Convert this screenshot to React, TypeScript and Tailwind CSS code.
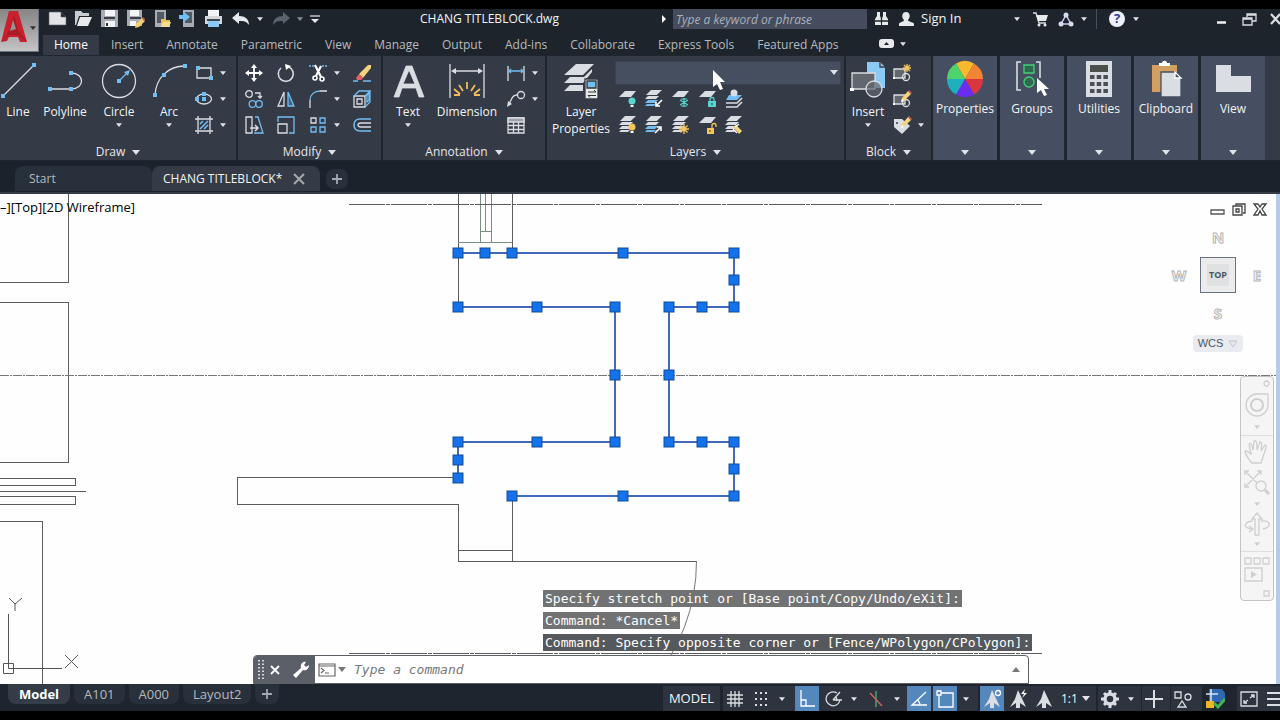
import type { ReactNode } from "react";

type IconProps = { w?: number; h?: number; children: ReactNode };

const Icon = ({ w = 20, h = 20, children }: IconProps) => (
  <svg
    width={w}
    height={h}
    viewBox={`0 0 ${w} ${h}`}
    fill="none"
    stroke="#dadde1"
    strokeWidth="1.3"
    className="shrink-0"
    aria-hidden="true"
  >
    {children}
  </svg>
);

const Caret = ({ big = false, color = "#dfe2e6" }: { big?: boolean; color?: string }) => (
  <svg width={big ? 8 : 6} height={big ? 5 : 4} viewBox="0 0 8 5" className="shrink-0" aria-hidden="true">
    <path d="M0 0H8L4 5Z" fill={color} />
  </svg>
);

const Dot = ({ x, y }: { x: number; y: number }) => (
  <rect x={x - 2} y={y - 2} width="4" height="4" fill="#72bdf2" stroke="none" />
);

const Pencil = () => (
  <g stroke="none">
    <path d="M9 13L10 9L16 2L19 5L13 11Z" fill="#f3d37c" />
    <path d="M16 2L17 1L20 4L19 5Z" fill="#d9534a" />
    <path d="M9 13L10 10L12 12Z" fill="#fff" />
  </g>
);

const Stack = ({ blue = false }: { blue?: boolean }) => (
  <g stroke="none">
    <path d="M7 1H18L13 6H2Z" fill="#dadde1" />
    <path d="M4 7H15L12 10H1Z" fill="#dadde1" />
    <path d="M4 11H14L11 14H1Z" fill={blue ? "#72bdf2" : "#dadde1"} />
    <path d="M3 15H12L10 17H1Z" fill={blue ? "#72bdf2" : "#dadde1"} />
    <path d="M1 6.500H13L18 2M1 10.500H12M1 14.500H12" stroke="#343a46" strokeWidth="1" />
  </g>
);

const Sheet = () => <path d="M7 2H18L13 8H1Z" fill="#dadde1" stroke="none" />;

/* ---------- title bar ---------- */

const quickAccess = [
  {
    label: "New",
    icon: <path d="M1 2H13L18 7V15H1Z M13 2V7H18" fill="#e1e3e6" stroke="#5b616b" strokeWidth="0.6" />,
  },
  {
    label: "Open",
    icon: (
      <g stroke="none">
        <path d="M1 1H7L9 3H15V6H5L2 15H1Z" fill="#c9ccd1" />
        <path d="M6 7H18L14 16H3Z" fill="#e7e9eb" />
      </g>
    ),
  },
  {
    label: "Save",
    icon: (
      <g stroke="none">
        <path d="M1 0H18V17H1Z" fill="#a9adb3" />
        <path d="M5 0H15V6H5ZM5 11H15V17H5Z" fill="#f3f4f5" />
        <path d="M4 7H15V9H4Z" fill="#3a3f48" />
        <path d="M6 13H8V16H6Z" fill="#333" />
      </g>
    ),
  },
  {
    label: "Save As",
    icon: (
      <g stroke="none">
        <path d="M1 0H16V16H1Z" fill="#a9adb3" />
        <path d="M4 0H13V6H4ZM4 11H10V16H4Z" fill="#f3f4f5" />
        <path d="M4 7H15V9H4Z" fill="#3a3f48" />
        <path d="M9 18L10 14L16 8L19 11L13 17Z" fill="#efcf6e" />
        <path d="M16 8L17 7L19 9L18 11Z" fill="#d9534a" />
      </g>
    ),
  },
  {
    label: "Open from Web and Mobile",
    icon: (
      <g stroke="none">
        <path d="M3 0H14V17H3Z" fill="#a9adb3" />
        <path d="M5 2H12V13H5Z" fill="#535963" />
        <path d="M9 9H13L14 10H18V17H9Z" fill="#edbf57" />
        <path d="M11 12H19L17 17H9Z" fill="#f7dc93" />
      </g>
    ),
  },
  {
    label: "Save to Web and Mobile",
    icon: (
      <g stroke="none">
        <path d="M5 0H16V17H5Z" fill="#a9adb3" />
        <path d="M7 2H14V13H7Z" fill="#535963" />
        <path d="M1 5H6V2L12 7L6 12V9H1Z" fill="#72bdf2" />
      </g>
    ),
  },
  {
    label: "Plot",
    icon: (
      <g stroke="none">
        <path d="M4 0H15V6H4Z" fill="#f3f4f5" />
        <path d="M1 6H18V14H1Z" fill="#d3d6da" />
        <path d="M3 9H16V11H3Z" fill="#41464f" />
        <path d="M4 11H15V17H4Z" fill="#8ccaf5" />
      </g>
    ),
  },
];

const menuTabs = [
  "Home",
  "Insert",
  "Annotate",
  "Parametric",
  "View",
  "Manage",
  "Output",
  "Add-ins",
  "Collaborate",
  "Express Tools",
  "Featured Apps",
];

function TitleBar() {
  return (
    <div className="mb-[6px] flex h-5 items-center">
      <div className="flex items-center gap-[6px] pl-[5px]">
        {quickAccess.map((q) => (
          <button key={q.label} aria-label={q.label}>
            <Icon w={20} h={18}>{q.icon}</Icon>
          </button>
        ))}
      </div>
      <button aria-label="Undo" className="ml-2">
        <Icon w={18} h={14}>
          <path d="M0 6L7 0V4C13 4 17 7 17 13C14 9 12 9 7 9V12Z" fill="#e7e9eb" stroke="none" />
        </Icon>
      </button>
      <button aria-label="Undo history" className="ml-[7px]">
        <Caret />
      </button>
      <button aria-label="Redo" className="ml-[9px]">
        <Icon w={18} h={14}>
          <path d="M18 6L11 0V4C5 4 1 7 1 13C4 9 6 9 11 9V12Z" fill="#5c626b" stroke="none" />
        </Icon>
      </button>
      <button aria-label="Redo history" className="ml-[7px]">
        <Caret color="#8b9098" />
      </button>
      <button aria-label="Customize toolbar" className="ml-[7px]">
        <Icon w={10} h={9}>
          <path d="M0 1H10" />
          <path d="M1 4H9L5 8Z" fill="#e7e9eb" stroke="none" />
        </Icon>
      </button>
      <h1 className="ml-[100px] whitespace-nowrap text-xs text-gray-100">CHANG TITLEBLOCK.dwg</h1>

      <div className="ml-auto flex w-[620px] shrink-0 items-center">
        <button aria-label="Collapse search" className="w-[13px]">
          <Icon w={8} h={8}>
            <path d="M2 0L6 4L2 8Z" fill="#fff" stroke="none" />
          </Icon>
        </button>
        <input
          aria-label="Search help"
          placeholder="Type a keyword or phrase"
          className="h-5 w-[194px] bg-[#444c5d] px-[3px] text-xs text-white outline-none placeholder:italic placeholder:text-[#abb1bc]"
        />
        <button aria-label="Find" className="ml-[6px]">
          <Icon w={17} h={16}>
            <path d="M4 1H7V5L8 7V14H2V8L4 5ZM10 1H13V5L15 8V14H9V7L10 5Z" fill="#e7e9eb" stroke="none" />
            <path d="M2 10H15M8.500 2V12" stroke="#1e242c" />
          </Icon>
        </button>
        <button className="ml-2 flex items-center gap-[6px] whitespace-nowrap text-gray-100">
          <Icon w={17} h={16}>
            <path d="M1 15V13C1 11 6 11 6 9C3 6 4 1 8 1C12 1 13 6 10 9C10 11 16 11 16 13V15Z" fill="#e7e9eb" stroke="none" />
          </Icon>
          <span className="w-[87px] text-left text-[13px]">Sign In</span>
          <Caret />
        </button>
        <button aria-label="Autodesk App Store" className="ml-3">
          <Icon w={17} h={15}>
            <path d="M1 1H4L7 11H14" />
            <path d="M4 3H16L14 9H6Z" fill="#e7e9eb" stroke="none" />
            <circle cx="7" cy="13" r="1.500" fill="#e7e9eb" stroke="none" />
            <circle cx="13" cy="13" r="1.500" fill="#e7e9eb" stroke="none" />
          </Icon>
        </button>
        <button aria-label="Stay connected" className="ml-[9px] flex items-center gap-[7px]">
          <Icon w={16} h={15}>
            <path d="M8 3L3 12H13Z" stroke="#c9cbe6" strokeWidth="1.500" />
            <g fill="#d9dbf2" stroke="none">
              <circle cx="8" cy="3" r="2.500" />
              <circle cx="3" cy="12" r="2.500" />
              <circle cx="13" cy="12" r="2.500" />
            </g>
          </Icon>
          <Caret />
        </button>
        <span className="ml-[9px] h-5 w-px bg-[#4a505a]" />
        <button aria-label="Help" className="ml-3 flex items-center gap-2">
          <span className="flex size-4 items-center justify-center rounded-full bg-[#eef0fa] text-[13px] font-bold text-[#2c3a94]">?</span>
          <Caret />
        </button>
        <div className="ml-auto flex items-center">
          <button aria-label="Minimize" className="mr-4">
            <Icon w={10} h={12}>
              <path d="M1 9.500H10" strokeWidth="2.500" stroke="#f0f1f2" />
            </Icon>
          </button>
          <button aria-label="Restore" className="mr-[13px]">
            <Icon w={15} h={13}>
              <path d="M5 4V1H14V8H10M1 5H10V12H1ZM1 6H10M5 2H14" />
            </Icon>
          </button>
          <button aria-label="Close" className="w-[10px] overflow-hidden">
            <Icon w={12} h={12}>
              <path d="M1 1L10 11M10 1L1 11" strokeWidth="2.200" />
            </Icon>
          </button>
        </div>
      </div>
    </div>
  );
}

function Header() {
  return (
    <header className="flex bg-[#1e242c]">
      <button
        aria-label="Application menu"
        className="flex h-[43px] w-[39px] shrink-0 items-center gap-[2px] border-r border-b border-gray-500 bg-linear-to-b from-[#858585] to-[#c4c4c4] pb-1"
      >
        <Icon w={28} h={36}>
          <path d="M1 32L9 1H18L27 32H20L18 27H9L7 31Z" fill="#c8202d" stroke="none" />
          <path d="M1 32C7 27 11 18 14 5L18 20L27 32L18 25L9 25Z" fill="#8f1420" stroke="none" opacity="0.5" />
          <path d="M13 10L16 19L10 21Z" fill="#949494" stroke="none" />
        </Icon>
        <Caret color="#333" />
      </button>
      <div className="min-w-0 flex-1 pl-[4px]">
        <TitleBar />
        <nav className="flex items-end gap-px">
          {menuTabs.map((t) => (
            <button
              key={t}
              className={
                t === "Home"
                  ? "h-5 whitespace-nowrap bg-[#343a46] px-[11px] text-xs leading-5 text-white"
                  : "h-5 whitespace-nowrap px-[11px] text-xs leading-5 text-[#b6babf]"
              }
            >
              {t}
            </button>
          ))}
          <button aria-label="Ribbon display" className="mb-[7px] ml-7 flex items-center gap-[6px]">
            <Icon w={15} h={9}>
              <rect width="15" height="9" rx="3" fill="#e7e9eb" stroke="none" />
              <path d="M5 6L7.500 3L10 6Z" fill="#1e242c" stroke="none" />
            </Icon>
            <Caret />
          </button>
        </nav>
      </div>
    </header>
  );
}

/* ---------- ribbon ---------- */

type PanelProps = { title: string; width: string; children: ReactNode };

const Panel = ({ title, width, children }: PanelProps) => (
  <section className={`flex shrink-0 flex-col border-r-2 border-[#20262f] bg-[#343a46] ${width}`}>
    <div className="flex flex-1">{children}</div>
    <button className="flex h-4 items-center justify-center gap-[7px] text-xs text-gray-200">
      {title}
      <Caret big />
    </button>
  </section>
);

type BigToolProps = { label: string; width: string; caret?: boolean; children: ReactNode };

const BigTool = ({ label, width, caret, children }: BigToolProps) => (
  <button className={`flex shrink-0 flex-col items-center pt-[5px] text-xs leading-[17px] text-gray-100 ${width}`}>
    <Icon w={38} h={38}>{children}</Icon>
    <span className="mt-1 mb-[3px]">{label}</span>
    {caret && <Caret />}
  </button>
);

type ToolProps = { label: string; caret?: boolean; children: ReactNode };

const Tool = ({ label, caret, children }: ToolProps) => (
  <button aria-label={label} className="flex h-[26px] items-center gap-[6px]">
    <Icon>{children}</Icon>
    {caret && <Caret />}
  </button>
);

function DrawPanel() {
  return (
    <Panel title="Draw" width="w-[238px]">
      <BigTool label="Line" width="w-9">
        <path d="M4 35L35 4" />
        <Dot x={4} y={35} />
        <Dot x={35} y={4} />
      </BigTool>
      <BigTool label="Polyline" width="w-[58px]">
        <path d="M4 28H25C39 28 39 12 25 12" />
        <Dot x={4} y={28} />
        <Dot x={25} y={28} />
        <Dot x={25} y={12} />
      </BigTool>
      <BigTool label="Circle" width="w-[50px]" caret>
        <circle cx="19" cy="20" r="16.500" />
        <path d="M19 20L28 11" stroke="#72bdf2" />
        <path d="M30 9L28 15L24 11Z" fill="#72bdf2" stroke="none" />
        <Dot x={19} y={20} />
      </BigTool>
      <BigTool label="Arc" width="w-[50px]" caret>
        <path d="M5 34C6 17 18 5 35 5" />
        <Dot x={5} y={34} />
        <Dot x={14} y={14} />
        <Dot x={35} y={5} />
      </BigTool>
      <div className="pt-1">
        <Tool label="Rectangle" caret>
          <path d="M3 5H17V15H3Z" />
          <Dot x={4} y={5} />
          <Dot x={17} y={15} />
        </Tool>
        <Tool label="Ellipse" caret>
          <ellipse cx="10" cy="10" rx="7.500" ry="5" />
          <Dot x={10} y={10} />
          <Dot x={3} y={10} />
          <Dot x={10} y={5} />
        </Tool>
        <Tool label="Hatch" caret>
          <path d="M4 1V19M16 1V19M1 4H19M1 16H19" />
          <path d="M6 9L9 6M6 14L14 6M10 14L14 10" stroke="#72bdf2" strokeWidth="1.600" />
        </Tool>
      </div>
    </Panel>
  );
}

function ModifyPanel() {
  return (
    <Panel title="Modify" width="w-[145px]">
      <div className="grid grid-cols-[32px_32px_44px_20px] content-start pt-1 pl-[6px]">
        <Tool label="Move">
          <path d="M10 3V17M3 10H17" stroke="#fff" strokeWidth="1.800" />
          <path d="M10 1L13 5H7ZM10 19L13 15H7ZM1 10L5 7V13ZM19 10L15 7V13Z" fill="#fff" stroke="none" />
        </Tool>
        <Tool label="Rotate">
          <path d="M13 4A7.500 7.500 0 1 1 5 5" strokeWidth="1.600" />
          <path d="M9 1L15 3L10 7Z" fill="#fff" stroke="none" />
        </Tool>
        <Tool label="Trim" caret>
          <path d="M1 3H7M14 3H19" stroke="#72bdf2" strokeDasharray="2 1" />
          <path d="M7 2L13 14M13 3L8 13" stroke="#fff" strokeWidth="2.200" />
          <circle cx="7" cy="15" r="2" stroke="#fff" strokeWidth="1.600" />
          <circle cx="14" cy="16" r="2" stroke="#fff" strokeWidth="1.600" />
        </Tool>
        <Tool label="Erase">
          <path d="M1 18H6M11 18H19" stroke="#72bdf2" />
          <path d="M7 11L16 2H19V5L11 15Z" fill="#f3d37c" stroke="none" />
          <path d="M7 11L11 15L9 17H5L4 15Z" fill="#e4606b" stroke="none" />
        </Tool>
        <Tool label="Copy">
          <circle cx="5" cy="5" r="3.300" />
          <path d="M11 4H16V8M14 7L16 9L18 7" />
          <circle cx="8.500" cy="15" r="3.300" stroke="#72bdf2" />
          <circle cx="15" cy="15" r="3.300" stroke="#72bdf2" />
        </Tool>
        <Tool label="Mirror">
          <path d="M8 3V17H2Z" />
          <path d="M12 3V17H18Z" stroke="#72bdf2" fill="#426581" />
        </Tool>
        <Tool label="Fillet" caret>
          <path d="M2 19V11M12 2H19" />
          <path d="M2 11C2 6 6 2 12 2" stroke="#72bdf2" />
        </Tool>
        <Tool label="Explode">
          <path d="M2 7H13V18H2ZM5 10H10V15H5Z" />
          <path d="M2 7L7 2H18L13 7M18 2V13L13 18M15 6L17 4V11L15 13Z" stroke="#72bdf2" />
        </Tool>
        <Tool label="Stretch">
          <path d="M2 2H8V18H2Z" />
          <path d="M11 2H14L19 18H10" stroke="#72bdf2" />
          <path d="M6 13H14M11 10L14 13L11 16" strokeWidth="1.500" />
        </Tool>
        <Tool label="Scale">
          <path d="M2 7V2H18V18H13" stroke="#72bdf2" />
          <path d="M2 9H11V18H2Z" />
        </Tool>
        <Tool label="Array" caret>
          <path d="M3 3H8V8H3Z" />
          <path d="M12 3H17V8H12ZM3 12H8V17H3ZM12 12H17V17H12Z" stroke="#72bdf2" />
        </Tool>
        <Tool label="Offset">
          <path d="M19 4H8C0 4 0 16 8 16H19" stroke="#72bdf2" strokeWidth="1.600" />
          <path d="M19 8H9C5 8 5 12 9 12H19" />
        </Tool>
      </div>
    </Panel>
  );
}

function AnnotationPanel() {
  return (
    <Panel title="Annotation" width="w-[164px]">
      <BigTool label="Text" width="w-[50px]" caret>
        <path d="M5 36L17 5H23L35 36H30L27 27H13L10 36ZM14 23H26L20 9Z" fill="#dadde1" stroke="#dadde1" strokeWidth="0.800" />
      </BigTool>
      <BigTool label="Dimension" width="w-[68px]">
        <path d="M2 3V37M36 3V37M5 10H33" />
        <path d="M3 10L8 7V13ZM35 10L30 7V13Z" fill="#dadde1" stroke="none" />
        <path d="M19 21V28M11 24L15 30M27 24L23 30M6 28L12 33M32 28L26 33M6 34H12M26 34H32" stroke="#f0bd5a" strokeWidth="1.800" />
      </BigTool>
      <div className="pt-1 pl-[5px]">
        <Tool label="Linear" caret>
          <path d="M2 3V18M18 3V18" />
          <path d="M3 8H17M5 6L3 8L5 10M15 6L17 8L15 10" stroke="#72bdf2" />
        </Tool>
        <Tool label="Leader" caret>
          <circle cx="15" cy="6" r="3.500" />
          <path d="M11 6C6 6 6 10 3 15" />
          <path d="M1 18L2 12L6 15Z" fill="#dadde1" stroke="none" />
        </Tool>
        <Tool label="Table">
          <path d="M2 3H18V18H2ZM2 10.500H18M2 14.500H18M7.500 7V18M12.500 7V18" />
          <path d="M2 3H18V7H2Z" fill="#9ba0a8" />
        </Tool>
      </div>
    </Panel>
  );
}

const layerTools = [
  { label: "Off", icon: <><Sheet /><circle cx="14" cy="12" r="3.500" fill="#58d5cf" stroke="none" /><path d="M12.500 17H15.500" stroke="#fff" strokeWidth="2" /></> },
  { label: "Isolate", icon: <><Stack blue /><path d="M18 11L12 17M12 13V17H16" stroke="#fff" strokeWidth="1.600" /></> },
  { label: "Freeze", icon: <><Sheet /><path d="M13 9V18M9 11L17 16M17 11L9 16M10 10H16M10 17H16" stroke="#58d5cf" strokeWidth="1.200" /></> },
  { label: "Lock", icon: <><Sheet /><path d="M10 12H18V18H10Z" fill="#58d5cf" stroke="none" /><path d="M12 12V10C12 8 16 8 16 10V12" stroke="#58d5cf" /><path d="M14 14V16" stroke="#275c5a" /></> },
  { label: "Make Current", icon: <><path d="M5 6H18L13 11H2Z" fill="#72bdf2" stroke="none" /><circle cx="10" cy="4" r="3.500" fill="#dadde1" stroke="none" /><path d="M2 14H13L18 9M2 18H13L18 13" strokeWidth="1.600" /></> },
  { label: "Turn All On", icon: <><Stack /><circle cx="14" cy="12" r="3.500" fill="#f3c65c" stroke="none" /><path d="M12.500 17H15.500" stroke="#fff" strokeWidth="2" /></> },
  { label: "Unisolate", icon: <><Stack blue /><path d="M11 18L17 12M13 12H17V16" stroke="#fff" strokeWidth="1.600" /></> },
  { label: "Thaw All", icon: <><Stack /><circle cx="13" cy="14" r="2.500" fill="#f3c65c" stroke="none" /><path d="M13 9V19M8 14H18M9.500 10.500L16.500 17.500M16.500 10.500L9.500 17.500" stroke="#f3c65c" /></> },
  { label: "Unlock", icon: <><Sheet /><path d="M9 13H16V19H9Z" fill="#f3c65c" stroke="none" /><path d="M14 13V10C14 8 18 8 18 10V12" stroke="#f3c65c" /><path d="M12 15V17" stroke="#735922" /></> },
  { label: "Match Layer", icon: <><Stack /><path d="M9 12L12 10L18 16L15 19Z" fill="#f3d37c" stroke="none" /><path d="M9 14L13 18M11 12L15 9" stroke="#fff" /></> },
];

function LayersPanel() {
  return (
    <Panel title="Layers" width="w-[299px]">
      <button className="flex w-[68px] shrink-0 flex-col items-center pt-[5px] text-xs leading-[17px] text-gray-100">
        <Icon w={38} h={38}>
          <g fill="#dadde1" stroke="none">
            <path d="M14 3H32L21 14H2Z" />
            <path d="M8 16H22L30 8V11L21 22H2Z" />
            <path d="M8 24H21V30H2Z" />
          </g>
          <path d="M23 18H36V38H23Z" fill="#e7e9eb" stroke="#343a46" />
          <path d="M25 20H34V27H25Z" fill="#72bdf2" stroke="#333" />
          <path d="M26 31H34M32 29L34 31M34 34.500H26L28 36.500" stroke="#333" strokeWidth="1" />
        </Icon>
        <span className="mt-1">
          Layer
          <br />
          Properties
        </span>
      </button>
      <div className="relative pt-[5px]">
        <select
          aria-label="Current layer"
          className="block h-6 w-[226px] appearance-none border border-[#3a4150] bg-[#454f60] outline-none"
        />
        <span className="pointer-events-none absolute top-[14px] right-[3px]">
          <Caret big />
        </span>
        <svg width="16" height="24" viewBox="0 0 16 24" className="absolute top-[13px] left-[97px]" aria-hidden="true">
          <path d="M1 1V18L5 15L8 21L11 20L8 13H13Z" fill="#fff" />
        </svg>
        <div className="mt-px grid grid-cols-[26px_27px_27px_26px_20px] pl-[3px]">
          {layerTools.map((t) => (
            <Tool key={t.label} label={t.label}>{t.icon}</Tool>
          ))}
        </div>
      </div>
    </Panel>
  );
}

const blockBase = (
  <>
    <path d="M2 6H13V15H2Z" fill="#62676f" />
    <circle cx="14" cy="14" r="3.500" />
    <path d="M1 14H3V16H1Z" fill="#fff" stroke="none" />
  </>
);

function BlockPanel() {
  return (
    <Panel title="Block" width="w-[87px]">
      <BigTool label="Insert" width="w-11" caret>
        <path d="M18 1H31L36 6V27H18Z" fill="#8ccaf5" stroke="none" />
        <path d="M31 1V6H36" stroke="#343a46" />
        <path d="M3 12H26V28H3Z" fill="#62676f" />
        <circle cx="25" cy="28" r="8" fill="#62676f" fillOpacity="0.700" />
        <path d="M1 27H5V30H1Z" fill="#fff" stroke="none" />
      </BigTool>
      <div className="pt-1 pl-[2px]">
        <Tool label="Create Block">
          {blockBase}
          <path d="M15 1V9M11 5H19M12 2L18 8M18 2L12 8" stroke="#f3c65c" />
        </Tool>
        <Tool label="Edit Block">
          {blockBase}
          <Pencil />
        </Tool>
        <Tool label="Edit Attributes" caret>
          <path d="M2 4H10L18 11L10 19L2 12Z" fill="#dadde1" stroke="none" />
          <circle cx="5" cy="8" r="1" fill="#343a46" stroke="none" />
          <Pencil />
        </Tool>
      </div>
    </Panel>
  );
}

const compactPanels = [
  {
    label: "Properties",
    icon: (
      <g stroke="none">
        <path d="M19 19L10 3.400A18 18 0 0 1 28 3.400Z" fill="#f9b92f" />
        <path d="M19 19L28 3.400A18 18 0 0 1 37 19Z" fill="#f28434" />
        <path d="M19 19H37A18 18 0 0 1 28 34.600Z" fill="#d9363f" />
        <path d="M19 19L28 34.600A18 18 0 0 1 10 34.600Z" fill="#6c2bf0" />
        <path d="M19 19L10 34.600A18 18 0 0 1 1 19Z" fill="#1fb0bd" />
        <path d="M19 19H1A18 18 0 0 1 10 3.400Z" fill="#4fd46b" />
      </g>
    ),
  },
  {
    label: "Groups",
    icon: (
      <>
        <path d="M8 2H4V30H8M23 2H27V18" strokeWidth="1.600" />
        <path d="M11 5H21V13H11Z" fill="#2f6a50" stroke="#45cf7a" />
        <circle cx="16" cy="22" r="5" fill="#2f6a50" stroke="#45cf7a" />
        <path d="M24 18V33L28 30L31 36L34 35L31 29H36Z" fill="#fff" stroke="none" />
      </>
    ),
  },
  {
    label: "Utilities",
    icon: (
      <>
        <path d="M6 1H32V37H6Z" fill="#dadde1" stroke="none" />
        <path d="M10 5H28V12H10Z" fill="#4a504c" stroke="none" />
        <path d="M10 17H28M10 24H28M10 31H28" stroke="#4a4f57" strokeWidth="4" strokeDasharray="4.500 2.200" />
      </>
    ),
  },
  {
    label: "Clipboard",
    icon: (
      <g stroke="none">
        <path d="M5 5H30V32H5Z" fill="#d2a062" />
        <path d="M12 3H15C15 0 20 0 20 3H23V6H12Z" fill="#fff" />
        <path d="M14 12H28L34 18V37H14Z" fill="#dadde1" stroke="#454f61" />
        <path d="M28 12V18H34Z" fill="#454f61" stroke="#fff" />
      </g>
    ),
  },
  {
    label: "View",
    icon: <path d="M2 5H17V16H37V32H2Z" fill="#dadde1" stroke="none" />,
  },
];

function Ribbon() {
  return (
    <div className="flex h-[106px] overflow-hidden border-y border-[#20262f] bg-[#343a46]">
      <DrawPanel />
      <ModifyPanel />
      <AnnotationPanel />
      <LayersPanel />
      <BlockPanel />
      <div className="flex shrink-0 gap-[3px] bg-[#20262f]">
        {compactPanels.map((p) => (
          <button
            key={p.label}
            className="flex w-16 flex-col items-center bg-[#454f61] pt-1 pb-[5px] text-xs leading-[17px] text-gray-100"
          >
            <Icon w={38} h={38}>{p.icon}</Icon>
            <span className="mt-[2px] mb-auto">{p.label}</span>
            <Caret big />
          </button>
        ))}
      </div>
    </div>
  );
}

function FileTabs() {
  return (
    <div className="flex h-[33px] items-end border-b-2 border-[#353c47] bg-[#1c222c] pb-px pl-[15px]">
      <button className="h-[25px] w-[137px] rounded-t-lg bg-[#28303b] pl-[14px] text-left text-xs text-[#b6babf]">
        Start
      </button>
      <div className="flex h-[25px] w-[168px] items-center rounded-t-lg bg-[#343b47] pl-[11px]">
        <button className="whitespace-nowrap text-xs text-gray-100">CHANG TITLEBLOCK*</button>
        <button aria-label="Close drawing" className="ml-auto pr-[15px]">
          <Icon w={12} h={12}>
            <path d="M1 1L11 11M11 1L1 11" stroke="#a4a9b0" strokeWidth="2" />
          </Icon>
        </button>
      </div>
      <button aria-label="New drawing" className="mb-[2px] ml-[6px] flex h-5 w-[22px] items-center justify-center rounded-lg bg-[#28303b]">
        <Icon w={10} h={10}>
          <path d="M5 0V10M0 5H10" stroke="#a4a9b0" strokeWidth="1.800" />
        </Icon>
      </button>
    </div>
  );
}

/* ---------- drawing area ---------- */

const grips = [
  [458, 253], [485, 253], [512, 253], [623, 253], [734, 253],
  [734, 280], [734, 307], [702, 307], [669, 307],
  [458, 307], [537, 307], [615, 307],
  [615, 375], [669, 375],
  [458, 442], [537, 442], [615, 442], [669, 442], [702, 442], [734, 442],
  [458, 460], [458, 478], [734, 469], [734, 496], [623, 496], [512, 496],
];

const history = [
  "Specify stretch point or [Base point/Copy/Undo/eXit]:",
  "Command: *Cancel*",
  "Command: Specify opposite corner or [Fence/WPolygon/CPolygon]:",
];

const Drawing = () => (
  <svg
    viewBox="0 194 1280 490"
    preserveAspectRatio="xMinYMin meet"
    className="h-full w-full"
    fill="none"
    stroke="#5c5c5c"
    role="img"
    aria-label="Floor plan with a selected column"
  >
    <g shapeRendering="crispEdges">
      <path d="M68.500 194V282.500H0M0 302.500H68.500V462.500H0M0 478.500H75.500V485.500H0M0 491.500H86M0 496.500H75.500V504.500H0M0 521.500H42.500V684" />
      <path d="M458.500 194V307M512.500 194V253" />
      <path d="M480.500 194V242M485.500 194V231M491.500 194V242M480 231.500H491M458 242.500H512" stroke="#7a8f7f" />
      <path d="M458 477.500H237.500V504.500H458.500V561.500H696.500M512.500 496V561M458 550.500H512" />
      <path d="M349 204.500H1042M349 653.500H1042" strokeDasharray="36 1 4 1" />
      <path d="M0 375.500H1276" stroke="#777" strokeDasharray="9 1 2 1" />
    </g>
    <path d="M696.500 561A185 185 0 0 1 650 684" stroke="#777" />
    <g stroke="#4269bd" strokeWidth="2">
      <path d="M458 253H734V307H669V442H734V496H512" />
      <path d="M458 307H615V442H458V478" />
    </g>
    {grips.map(([x, y]) => (
      <rect key={`${x}-${y}`} x={x - 5} y={y - 5} width="10" height="10" fill="#1473ec" stroke="#124c96" />
    ))}
    <path d="M8.500 614V668.500H62M3.500 663.500H13.500V673.500H3.500ZM9 598L15 604V611M22 598L15 604M65 655L78 668M78 655L65 668" stroke="#555" />
  </svg>
);

const compass = "w-5 text-center text-[15px] leading-[15px] font-bold text-white [-webkit-text-stroke:1px_#b5b5b5]";

function ViewCube() {
  return (
    <div className="absolute top-[9px] right-[9px] flex w-[98px] flex-col items-center">
      <div className="flex h-[13px] w-full items-center justify-end gap-[7px]">
        <button aria-label="Minimize view">
          <Icon w={15} h={12}><path d="M1 6H14V10H1Z" stroke="#555" /></Icon>
        </button>
        <button aria-label="Restore view">
          <Icon w={14} h={13}><path d="M4 3V1H13V10H11M1 3H10V12H1ZM4 6H7V9H4Z" stroke="#444" /></Icon>
        </button>
        <button aria-label="Close view">
          <Icon w={14} h={13}><path d="M1 1H5L7 4L9 1H13L9 6L13 12H9L7 8L5 12H1L5 6Z" stroke="#444" /></Icon>
        </button>
      </div>
      <span className={`mt-[14px] ${compass}`}>N</span>
      <div className="mt-[12px] flex w-full items-center justify-center gap-[11px]">
        <span className={compass}>W</span>
        <button className="size-9 shrink-0 border border-gray-500 bg-[#ececec] p-[6px] text-[9px] font-bold text-gray-600">
          <span className="flex size-full items-center justify-center bg-[#e0e1e3]">TOP</span>
        </button>
        <span className={compass}>E</span>
      </div>
      <span className={`mt-[13px] ${compass}`}>S</span>
      <button className="mt-[14px] flex h-[17px] w-[50px] items-center justify-center gap-[5px] rounded bg-[#e9ebf0] font-['Liberation_Sans',sans-serif] text-[11px] text-gray-600">
        WCS
        <Icon w={10} h={8}><path d="M1 1H9L5 7Z" stroke="#c3c5ca" strokeWidth="1" /></Icon>
      </button>
    </div>
  );
}

function NavigationBar() {
  return (
    <div className="absolute top-[182px] right-[2px] flex h-[225px] w-[34px] flex-col items-center rounded border border-[#c4c4c4] bg-[#f5f5f5]">
      <button aria-label="Steering wheel" className="mt-[14px]">
        <Icon w={28} h={28}>
          <path d="M25 3V14A11 11 0 1 1 14 3Z" stroke="#cfcfcf" />
          <circle cx="14" cy="14" r="6" stroke="#cfcfcf" strokeWidth="2" />
        </Icon>
      </button>
      <span className="mt-[6px]"><Caret color="#cfcfcf" /></span>
      <span className="mt-[6px] h-px w-full bg-[#dedede]" />
      <button aria-label="Pan" className="mt-[3px]">
        <Icon w={28} h={26}>
          <path d="M9 24C5 20 3 16 2 12C4 11 6 14 8 15L6 5C8 3 9 6 10 11L11 2C13 1 14 3 14 11L17 3C19 3 19 5 18 12L22 6C25 6 21 14 20 18L18 24Z" stroke="#cfcfcf" />
        </Icon>
      </button>
      <button aria-label="Zoom extents" className="mt-1">
        <Icon w={28} h={26}>
          <path d="M2 2L18 18M18 2L2 18M2 6V2H6M14 2H18V6M2 14V18H6" stroke="#cfcfcf" />
          <circle cx="18" cy="17" r="5" stroke="#cfcfcf" fill="#f5f5f5" />
          <path d="M22 21L26 25" stroke="#cfcfcf" strokeWidth="3" />
        </Icon>
      </button>
      <span className="mt-[7px]"><Caret color="#cfcfcf" /></span>
      <button aria-label="Orbit" className="mt-[5px]">
        <Icon w={28} h={26}>
          <path d="M12 24V8H9L14 2L19 8H16V24Z" stroke="#cfcfcf" />
          <path d="M20 18C29 16 28 9 18 10M10 10C0 11 0 17 9 18M6 15L10 18L6 21" stroke="#cfcfcf" />
        </Icon>
      </button>
      <span className="mt-[5px]"><Caret color="#cfcfcf" /></span>
      <span className="mt-[5px] h-px w-full bg-[#dedede]" />
      <button aria-label="ShowMotion" className="mt-1">
        <Icon w={28} h={28}>
          <path d="M2 2H8V8H2ZM11 2H17V8H11ZM20 2H26V8H20ZM2 12H19V25H2Z" stroke="#cfcfcf" />
          <path d="M8 15L14 18.500L8 22Z" fill="#cfcfcf" stroke="none" />
        </Icon>
      </button>
      <div className="absolute inset-y-[3px] right-[3px] flex flex-col justify-between">
        <Icon w={7} h={7}><circle cx="3.500" cy="3.500" r="2.500" stroke="#cfcfcf" /></Icon>
        <Icon w={7} h={7}><path d="M1 1H6V6H1Z" stroke="#cfcfcf" /></Icon>
      </div>
    </div>
  );
}

function CommandLine() {
  return (
    <div className="absolute bottom-0 left-[253px] w-[776px] font-['DejaVu_Sans_Mono',monospace] text-[13px]">
      <div className="mb-1 flex flex-col items-start gap-[5px] pl-[290px] leading-[17px] text-white">
        {history.map((line, i) => (
          <p
            key={line}
            className={i === 2 ? "whitespace-nowrap bg-[#55585c] px-[2px]" : "whitespace-nowrap bg-[#707274] px-[2px]"}
          >
            {line}
          </p>
        ))}
      </div>
      <div className="flex h-[29px] items-stretch overflow-hidden rounded-t border border-[#5b5f66] bg-white">
        <div className="flex w-[61px] items-center bg-[#5a5f68] pl-1">
          <Icon w={6} h={20}>
            <path d="M1 0V20M5 0V20" stroke="#fff" strokeWidth="1.500" strokeDasharray="1.500 2" />
          </Icon>
          <button aria-label="Close command line" className="ml-[6px]">
            <Icon w={10} h={10}><path d="M1 1L9 9M9 1L1 9" stroke="#fff" strokeWidth="1.800" /></Icon>
          </button>
          <button aria-label="Customize" className="ml-3">
            <Icon w={17} h={17}>
              <path d="M1 14L9 7C8 3 11 0 14 1L12 4L14 6L17 4C17 8 14 10 11 9L4 17Z" fill="#fff" stroke="none" />
            </Icon>
          </button>
        </div>
        <button aria-label="Recent commands" className="flex items-center gap-[2px] pl-[3px] pr-1">
          <Icon w={18} h={14}>
            <path d="M1 1H17V13H1ZM1 3H17M3 5L6 7.500L3 10M7 10H11" stroke="#666" strokeWidth="1.200" />
          </Icon>
          <Caret big color="#777" />
        </button>
        <input
          aria-label="Command"
          placeholder="Type a command"
          className="min-w-0 flex-1 bg-white pl-1 text-gray-800 outline-none placeholder:italic placeholder:text-[#777]"
        />
        <button aria-label="Show history" className="w-4">
          <Icon w={8} h={5}><path d="M0 5H8L4 0Z" fill="#777" stroke="none" /></Icon>
        </button>
      </div>
    </div>
  );
}

function Viewport() {
  return (
    <main className="relative min-h-0 flex-1 overflow-hidden border-r-4 border-[#b5cbe8] bg-[#fefefe]">
      <div className="absolute inset-y-0 left-0 w-screen">
        <Drawing />
      </div>
      <button className="absolute top-1 left-0 whitespace-nowrap text-[13px] text-black">–][Top][2D Wireframe]</button>
      <ViewCube />
      <NavigationBar />
      <CommandLine />
    </main>
  );
}

/* ---------- status bar ---------- */

type StatusProps = { label: string; on?: boolean; caret?: boolean; width: string; children?: ReactNode };

const Status = ({ label, on, caret, width, children }: StatusProps) => (
  <button aria-label={label} className={`flex h-[25px] shrink-0 items-center ${width}`}>
    <span className={on ? "flex h-full w-6 items-center justify-center bg-[#5488bd]" : "flex h-full w-6 items-center justify-center"}>
      <Icon>{children}</Icon>
    </span>
    {caret && <span className="ml-[6px]"><Caret /></span>}
  </button>
);

const needle = <path d="M10 1L18 18L12 14V19H8V14L2 18L7 10Z" fill="#dadde1" stroke="none" />;

const layouts = ["A101", "A000", "Layout2"];

function StatusBar() {
  return (
    <footer className="flex h-[27px] items-start bg-[#1e252e]">
      <nav className="flex gap-1 pl-2 text-[13px] leading-5">
        <button className="w-[62px] rounded-b-lg bg-[#343c47] font-bold text-white">Model</button>
        {layouts.map((l) => (
          <button key={l} className="rounded-b-lg bg-[#28303b] px-[10px] text-[#b6babf]">
            {l}
          </button>
        ))}
        <button aria-label="New layout" className="flex w-6 items-center justify-center rounded-b-lg bg-[#28303b]">
          <Icon w={10} h={10}><path d="M5 0V10M0 5H10" stroke="#a4a9b0" strokeWidth="1.800" /></Icon>
        </button>
      </nav>
      <div className="ml-auto flex w-[617px] shrink-0 items-center overflow-hidden pt-[2px]">
        <button className="h-[25px] w-[57px] shrink-0 bg-[#2d343f] text-[13px] text-gray-100">MODEL</button>
        <div className="ml-[3px] flex shrink-0 bg-[#2d343f]">
          <Status label="Grid" width="w-[26px]">
            <path d="M6 2V18M10 2V18M14 2V18M2 6H18M2 10H18M2 14H18" />
          </Status>
          <Status label="Snap" caret width="w-[46px]">
            <path d="M4 4H18M4 10H18M4 16H18" strokeWidth="2" strokeDasharray="2 3" />
          </Status>
          <Status label="Ortho" on width="w-[26px]">
            <path d="M4 1V17H18M4 11H9V17" stroke="#fff" />
          </Status>
          <Status label="Polar" caret width="w-[43px]">
            <path d="M14 4A7 7 0 1 0 17 11M10 11H19M10 11L17 3M13 7L14 12" />
          </Status>
          <Status label="Isometric" caret width="w-[43px]">
            <path d="M10 2V18" stroke="#4fb56a" />
            <path d="M4 4L16 17" stroke="#d46467" />
          </Status>
          <Status label="Object tracking" on width="w-[26px]">
            <path d="M17 3L3 16H18M9 11L11 15" stroke="#fff" />
          </Status>
          <Status label="Object snap" on caret width="w-[45px]">
            <path d="M6 4H18V18H4V6" stroke="#fff" />
            <path d="M2 2H6V6H2Z" stroke="#fff" />
          </Status>
        </div>
        <div className="ml-[2px] flex shrink-0 bg-[#2d343f]">
          <Status label="Annotation visibility" on width="w-[26px]">
            {needle}
            <circle cx="16" cy="4" r="2.500" fill="#5488bd" stroke="#fff" />
          </Status>
          <Status label="Auto scale" width="w-[26px]">
            {needle}
            <path d="M17 0L13 5H16L14 9L19 4H16Z" fill="#fff" stroke="none" />
          </Status>
          <Status label="Annotation scale" width="w-[26px]">{needle}</Status>
          <button className="flex w-[38px] items-center gap-1 pl-[3px] text-xs text-gray-100">
            1:1
            <Caret big />
          </button>
        </div>
        <div className="ml-[2px] flex shrink-0 gap-px">
          <div className="bg-[#2d343f]">
            <Status label="Workspace" caret width="w-[43px]">
              <circle cx="10" cy="10" r="5" strokeWidth="3.500" />
              <path d="M10 1V4M10 16V19M1 10H4M16 10H19M4 4L6 6M14 14L16 16M16 4L14 6M4 16L6 14" strokeWidth="3" />
            </Status>
          </div>
          <div className="bg-[#2d343f]">
            <Status label="Annotation monitor" width="w-7">
              <path d="M10 1V19M1 10H19" strokeWidth="2" />
            </Status>
          </div>
          <div className="bg-[#2d343f]">
            <Status label="Isolate objects" width="w-[31px]">
              <path d="M2 3H8V9H2ZM9 12L5 18H13Z" />
              <circle cx="15" cy="8" r="3" />
            </Status>
          </div>
          <Status label="Graphics performance" width="w-[33px]">
            <path d="M4 0H17L20 4V13H4Z" fill="#2d68b0" stroke="none" />
            <path d="M6 0V12M1 5H13" stroke="#cfe5f8" strokeWidth="1.600" />
            <path d="M1 12H9V19H1Z" fill="#f0b52a" stroke="none" />
            <path d="M9 14L13 18L20 10" stroke="#42b352" strokeWidth="3" />
          </Status>
          <div className="flex bg-[#2d343f]">
            <Status label="Clean screen" width="w-[26px]">
              <path d="M2 3H18V17H2ZM11 9L15 6M12 6H15V9M9 11L5 14M5 11V14H8" />
            </Status>
            <Status label="Customization" width="w-6">
              <path d="M2 4H20M2 10H20M2 16H20" strokeWidth="1.800" />
            </Status>
          </div>
        </div>
      </div>
    </footer>
  );
}

export default function App() {
  return (
    <div className="flex h-screen flex-col overflow-hidden border-y-[9px] border-black bg-[#1e242c] font-['Open_Sans','Noto_Sans',sans-serif]">
      <Header />
      <Ribbon />
      <FileTabs />
      <Viewport />
      <StatusBar />
    </div>
  );
}
